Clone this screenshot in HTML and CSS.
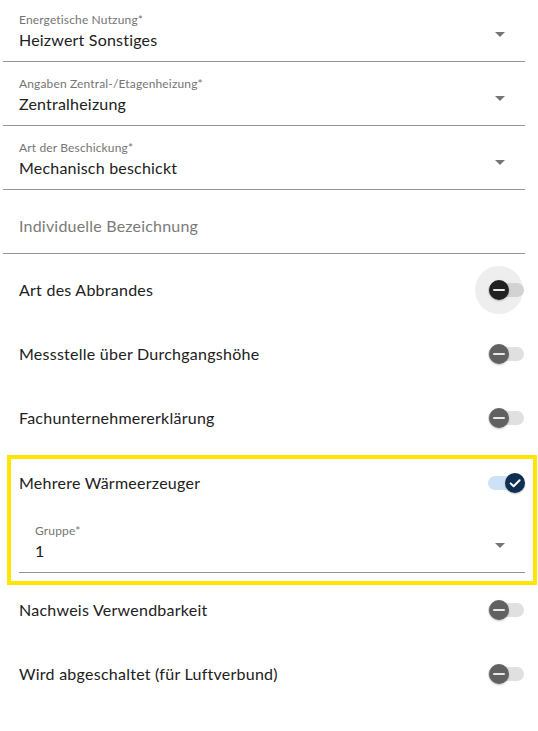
FILE: index.html
```html
<!DOCTYPE html>
<html lang="de">
<head>
<meta charset="utf-8">
<title>Formular</title>
<link rel="stylesheet" href="styles.css">
</head>
<body>
<div class="page">
  <div class="field select">
    <div class="label">Energetische Nutzung*</div>
    <div class="value">Heizwert Sonstiges</div>
    <span class="arrow"></span>
  </div>
  <div class="field select">
    <div class="label">Angaben Zentral-/Etagenheizung*</div>
    <div class="value">Zentralheizung</div>
    <span class="arrow"></span>
  </div>
  <div class="field select">
    <div class="label">Art der Beschickung*</div>
    <div class="value">Mechanisch beschickt</div>
    <span class="arrow"></span>
  </div>
  <div class="field text">
    <div class="placeholder">Individuelle Bezeichnung</div>
  </div>

  <div class="toggles">
    <div class="row">
      <span class="row-text">Art des Abbrandes</span>
      <span class="switch focused"><span class="ripple"></span><span class="track"></span><span class="thumb"><span class="minus"></span></span></span>
    </div>
    <div class="row">
      <span class="row-text">Messstelle über Durchgangshöhe</span>
      <span class="switch"><span class="track"></span><span class="thumb"><span class="minus"></span></span></span>
    </div>
    <div class="row">
      <span class="row-text">Fachunternehmererklärung</span>
      <span class="switch"><span class="track"></span><span class="thumb"><span class="minus"></span></span></span>
    </div>
  </div>

  <div class="highlight">
    <div class="row inner-row">
      <span class="row-text">Mehrere Wärmeerzeuger</span>
      <span class="switch checked"><span class="track"></span><span class="thumb">
        <svg class="check" viewBox="0 0 20 20" width="20" height="20"><path d="M5.6 10.4 L8.6 13.3 L14.6 7.2" fill="none" stroke="#ffffff" stroke-width="2" stroke-linecap="round" stroke-linejoin="round"/></svg>
      </span></span>
    </div>
    <div class="field select">
      <div class="label">Gruppe*</div>
      <div class="value">1</div>
      <span class="arrow"></span>
    </div>
  </div>

  <div class="toggles after">
    <div class="row">
      <span class="row-text">Nachweis Verwendbarkeit</span>
      <span class="switch"><span class="track"></span><span class="thumb"><span class="minus"></span></span></span>
    </div>
    <div class="row">
      <span class="row-text">Wird abgeschaltet (für Luftverbund)</span>
      <span class="switch"><span class="track"></span><span class="thumb"><span class="minus"></span></span></span>
    </div>
  </div>
</div>
</body>
</html>
```

FILE: styles.css
```css
html, body {
  margin: 0;
  padding: 0;
  background: #ffffff;
}

body {
  font-family: Lato, "Open Sans", "Liberation Sans", sans-serif;
  color: #212121;
}

.page {
  width: 522px;
  padding: 0 13px 0 3px;
}

.field {
  position: relative;
  height: 61px;
  border-bottom: 1px solid #949494;
  margin-bottom: 2px;
  padding-left: 16px;
  box-sizing: content-box;
}

.label {
  padding-top: 13px;
  font-size: 12px;
  line-height: 14px;
  color: #757575;
  letter-spacing: 0.15px;
}

.value {
  margin-top: 3px;
  font-size: 16px;
  line-height: 20px;
  color: #212121;
  letter-spacing: 0.2px;
}

.placeholder {
  padding-top: 24px;
  font-size: 16px;
  line-height: 20px;
  color: #7a7a7a;
  letter-spacing: 0.2px;
}

.arrow {
  position: absolute;
  right: 20px;
  top: 32px;
  width: 0;
  height: 0;
  border-left: 5px solid transparent;
  border-right: 5px solid transparent;
  border-top: 5px solid #757575;
}

.toggles {
  padding-top: 2px;
}

.row {
  display: flex;
  align-items: center;
  justify-content: space-between;
  height: 64px;
  padding-left: 16px;
}

.row-text {
  font-size: 16px;
  line-height: 20px;
  letter-spacing: 0.25px;
}

.switch {
  position: relative;
  width: 38px;
  height: 20px;
  flex: none;
}

.ripple {
  position: absolute;
  left: -12px;
  top: -14px;
  width: 48px;
  height: 48px;
  border-radius: 50%;
  background: #eeeeee;
}

.track {
  position: absolute;
  left: 1px;
  top: 3px;
  width: 36px;
  height: 14px;
  border-radius: 7px;
  background: #e0e0e0;
}

.thumb {
  position: absolute;
  left: 2px;
  top: 0;
  width: 20px;
  height: 20px;
  border-radius: 50%;
  background: #616161;
  box-shadow: 0 1px 2px rgba(0, 0, 0, 0.25);
}

.minus {
  position: absolute;
  left: 4px;
  top: 9px;
  width: 12px;
  height: 2px;
  border-radius: 1px;
  background: #e8e8e8;
}

.switch.focused .track {
  background: #d2d2d2;
}

.switch.focused .thumb {
  background: #212121;
}

.switch.checked .track {
  background: #cde2f7;
}

.switch.checked .thumb {
  left: 18px;
  background: #0f2f52;
}

.check {
  display: block;
}

.highlight {
  margin: 5px -12px 0 4px;
  border: 4px solid #ffe500;
  padding: 0 8px 8px 8px;
}

.inner-row {
  height: 48px;
  padding-left: 0;
}

.highlight .field {
  margin-top: 4px;
  margin-bottom: 0;
}

.toggles.after {
  padding-top: 0;
  margin-top: -7px;
}
```
